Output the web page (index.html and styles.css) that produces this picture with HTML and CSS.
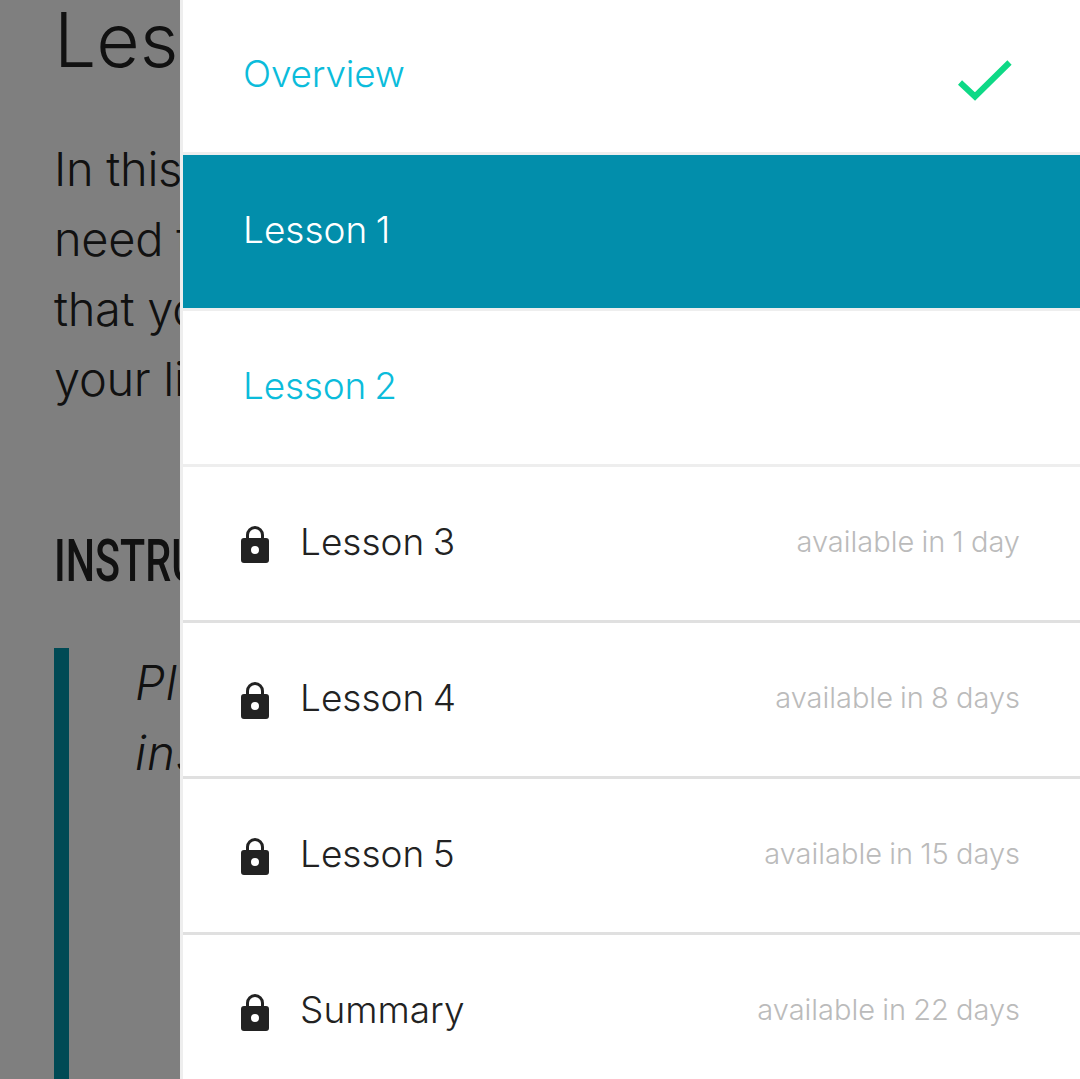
FILE: index.html
```html
<!DOCTYPE html>
<html lang="en">
<head>
<meta charset="utf-8">
<title>Lesson menu</title>
<link rel="stylesheet" href="styles.css">
</head>
<body>
<main class="page">
  <h1 class="title">Lesson 1</h1>
  <p class="intro">In this lesson you will<br>need to find the things<br>that you want to put in<br>your life and your work</p>
  <h2 class="heading">INSTRUCTIONS</h2>
  <blockquote class="note"><p class="note-text">Please read the<br>instructions below</p></blockquote>
</main>
<div class="scrim"></div>
<nav class="drawer">
  <ul class="menu">
    <li class="row row-light">
      <span class="name name-open">Overview</span>
      <svg class="check" width="54" height="42" viewBox="0 0 54 42"><path d="M2 22.500 17 36.500 51.500 2.500" fill="none" stroke="#0ed986" stroke-width="6"/></svg>
    </li>
    <li class="row row-light row-current"><span class="name name-current">Lesson 1</span></li>
    <li class="row row-light"><span class="name name-open">Lesson 2</span></li>
    <li class="row">
      <svg class="lock" width="28" height="37" viewBox="0 0 28 37"><path class="lock-shackle" d="M6.500 13V9a7.500 7.500 0 0 1 15 0v4"/><path class="lock-body" fill-rule="evenodd" d="M3 12h22a3 3 0 0 1 3 3v19a3 3 0 0 1-3 3H3a3 3 0 0 1-3-3V15a3 3 0 0 1 3-3zM14 20a4 4 0 1 0 0 8 4 4 0 0 0 0-8z"/></svg>
      <span class="name">Lesson 3</span><span class="avail">available in 1 day</span>
    </li>
    <li class="row">
      <svg class="lock" width="28" height="37" viewBox="0 0 28 37"><path class="lock-shackle" d="M6.500 13V9a7.500 7.500 0 0 1 15 0v4"/><path class="lock-body" fill-rule="evenodd" d="M3 12h22a3 3 0 0 1 3 3v19a3 3 0 0 1-3 3H3a3 3 0 0 1-3-3V15a3 3 0 0 1 3-3zM14 20a4 4 0 1 0 0 8 4 4 0 0 0 0-8z"/></svg>
      <span class="name">Lesson 4</span><span class="avail">available in 8 days</span>
    </li>
    <li class="row">
      <svg class="lock" width="28" height="37" viewBox="0 0 28 37"><path class="lock-shackle" d="M6.500 13V9a7.500 7.500 0 0 1 15 0v4"/><path class="lock-body" fill-rule="evenodd" d="M3 12h22a3 3 0 0 1 3 3v19a3 3 0 0 1-3 3H3a3 3 0 0 1-3-3V15a3 3 0 0 1 3-3zM14 20a4 4 0 1 0 0 8 4 4 0 0 0 0-8z"/></svg>
      <span class="name">Lesson 5</span><span class="avail">available in 15 days</span>
    </li>
    <li class="row">
      <svg class="lock" width="28" height="37" viewBox="0 0 28 37"><path class="lock-shackle" d="M6.500 13V9a7.500 7.500 0 0 1 15 0v4"/><path class="lock-body" fill-rule="evenodd" d="M3 12h22a3 3 0 0 1 3 3v19a3 3 0 0 1-3 3H3a3 3 0 0 1-3-3V15a3 3 0 0 1 3-3zM14 20a4 4 0 1 0 0 8 4 4 0 0 0 0-8z"/></svg>
      <span class="name">Summary</span><span class="avail">available in 22 days</span>
    </li>
  </ul>
</nav>
</body>
</html>
```
FILE: styles.css
```css
* { box-sizing: border-box; }
html, body { margin: 0; height: 100%; overflow: hidden; }
body { background: #fff; color: #222; font-family: Inter, "Liberation Sans", sans-serif; font-weight: 300; }

.page { padding: 0 54px; height: 1079px; overflow: hidden; display: flex; flex-direction: column; white-space: nowrap; }
.title { margin: -6px 0 0; font-size: 75px; line-height: 92px; font-weight: 300; }
.intro { margin: 48px 0 0; font-size: 47px; line-height: 70px; letter-spacing: -.3px; }
.heading { margin: 112px 0 0; font-family: Roboto, "Liberation Sans", sans-serif; font-size: 59px; line-height: 70px; font-weight: 500; transform: scaleX(.7); transform-origin: left center; }
.note { margin: 52px 0 0; padding: 0 0 0 66px; border-left: 15px solid #0094ab; height: 600px; flex: none; }
.note-text { margin: 0; font-size: 47.500px; line-height: 70px; font-style: italic; letter-spacing: 1px; }

.scrim { position: absolute; inset: 0; background: rgba(0, 0, 0, .5); }

.drawer { position: absolute; top: 0; right: 0; bottom: 0; left: 180px; background: #fff; border-left: 3px solid #eee; overflow: hidden; }
.menu { list-style: none; margin: -1px 0 0; padding: 0; }
.row { display: flex; align-items: center; height: 156px; padding: 0 60px 0 58px; border-bottom: 3px solid #e0e0e0; }
.row-light { border-bottom-color: #eee; padding-left: 60px; }
.row-current { background: #028eab; }
.name { font-size: 37px; line-height: 46px; color: #222; word-spacing: -2px; margin-top: -4px; }
.name-open { color: #0bbcdb; letter-spacing: -.2px; }
.name-current { color: #fff; }
.avail { margin-left: auto; font-size: 29px; line-height: 38px; color: #bbb; word-spacing: -1px; margin-top: -4px; }
.lock { margin: 2px 31px 0 0; flex: none; }
.lock-shackle { fill: none; stroke: #222; stroke-width: 3; }
.lock-body { fill: #222; }
.check { margin: 10px 8px 0 auto; flex: none; }
```
